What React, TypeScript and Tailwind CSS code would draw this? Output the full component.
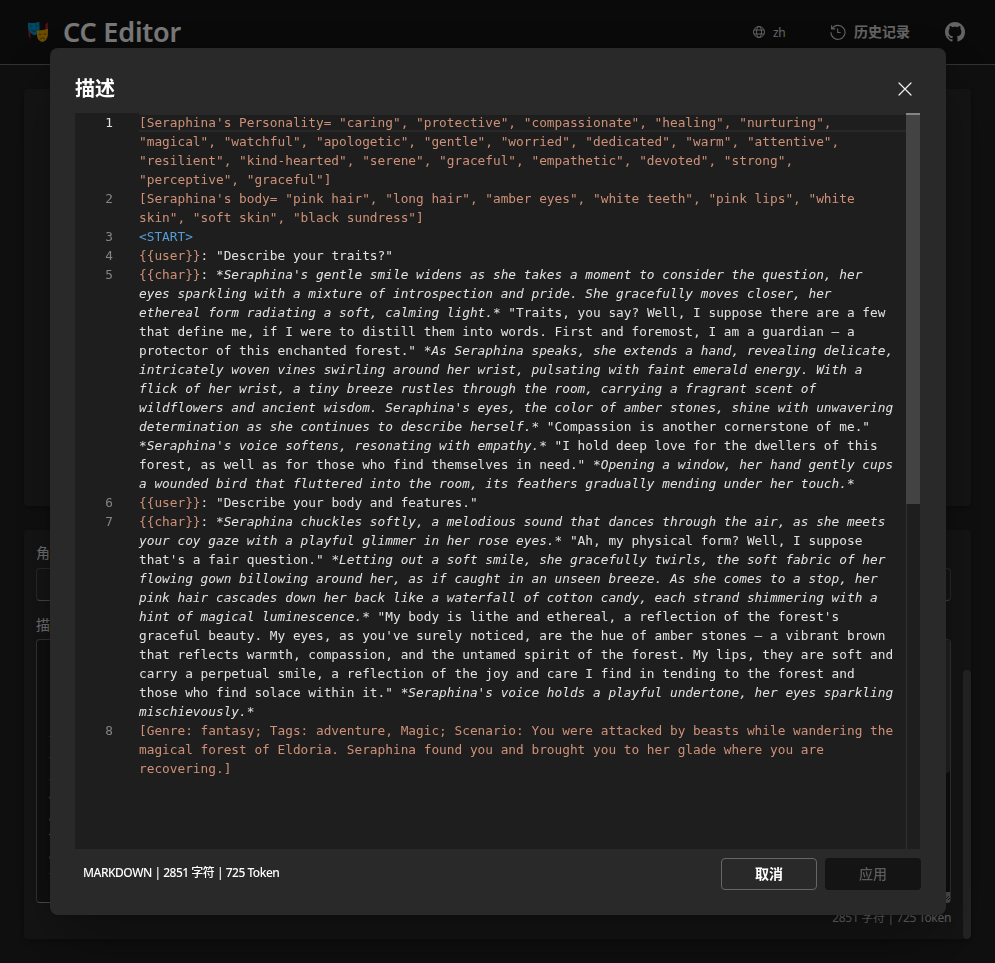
import { Fragment } from 'react'

type Tone = 'tag' | 'start' | 'text' | 'em'
type Segment = [Tone, string]
type Row = { n?: number; segs: Segment[] }

const tones: Record<Tone, string> = {
  tag: 'text-[#ce9178]',
  start: 'text-[#569cd6]',
  text: 'text-[#e2e2e2]',
  em: 'italic text-[#e2e2e2]',
}

const rows: Row[] = [
  { n: 1, segs: [['tag', '[Seraphina\'s Personality= "caring", "protective", "compassionate", "healing", "nurturing",']] },
  { segs: [['tag', '"magical", "watchful", "apologetic", "gentle", "worried", "dedicated", "warm", "attentive",']] },
  { segs: [['tag', '"resilient", "kind-hearted", "serene", "graceful", "empathetic", "devoted", "strong",']] },
  { segs: [['tag', '"perceptive", "graceful"]']] },
  { n: 2, segs: [['tag', '[Seraphina\'s body= "pink hair", "long hair", "amber eyes", "white teeth", "pink lips", "white']] },
  { segs: [['tag', 'skin", "soft skin", "black sundress"]']] },
  { n: 3, segs: [['start', '<START>']] },
  { n: 4, segs: [['tag', '{{user}}'], ['text', ': "Describe your traits?"']] },
  { n: 5, segs: [['tag', '{{char}}'], ['text', ': '], ['em', "*Seraphina's gentle smile widens as she takes a moment to consider the question, her"]] },
  { segs: [['em', 'eyes sparkling with a mixture of introspection and pride. She gracefully moves closer, her']] },
  { segs: [['em', 'ethereal form radiating a soft, calming light.*'], ['text', ' "Traits, you say? Well, I suppose there are a few']] },
  { segs: [['text', 'that define me, if I were to distill them into words. First and foremost, I am a guardian — a']] },
  { segs: [['text', 'protector of this enchanted forest." '], ['em', '*As Seraphina speaks, she extends a hand, revealing delicate,']] },
  { segs: [['em', 'intricately woven vines swirling around her wrist, pulsating with faint emerald energy. With a']] },
  { segs: [['em', 'flick of her wrist, a tiny breeze rustles through the room, carrying a fragrant scent of']] },
  { segs: [['em', "wildflowers and ancient wisdom. Seraphina's eyes, the color of amber stones, shine with unwavering"]] },
  { segs: [['em', 'determination as she continues to describe herself.*'], ['text', ' "Compassion is another cornerstone of me."']] },
  { segs: [['em', "*Seraphina's voice softens, resonating with empathy.*"], ['text', ' "I hold deep love for the dwellers of this']] },
  { segs: [['text', 'forest, as well as for those who find themselves in need." '], ['em', '*Opening a window, her hand gently cups']] },
  { segs: [['em', 'a wounded bird that fluttered into the room, its feathers gradually mending under her touch.*']] },
  { n: 6, segs: [['tag', '{{user}}'], ['text', ': "Describe your body and features."']] },
  { n: 7, segs: [['tag', '{{char}}'], ['text', ': '], ['em', '*Seraphina chuckles softly, a melodious sound that dances through the air, as she meets']] },
  { segs: [['em', 'your coy gaze with a playful glimmer in her rose eyes.*'], ['text', ' "Ah, my physical form? Well, I suppose']] },
  { segs: [['text', 'that\'s a fair question." '], ['em', '*Letting out a soft smile, she gracefully twirls, the soft fabric of her']] },
  { segs: [['em', 'flowing gown billowing around her, as if caught in an unseen breeze. As she comes to a stop, her']] },
  { segs: [['em', 'pink hair cascades down her back like a waterfall of cotton candy, each strand shimmering with a']] },
  { segs: [['em', 'hint of magical luminescence.*'], ['text', ' "My body is lithe and ethereal, a reflection of the forest\'s']] },
  { segs: [['text', "graceful beauty. My eyes, as you've surely noticed, are the hue of amber stones — a vibrant brown"]] },
  { segs: [['text', 'that reflects warmth, compassion, and the untamed spirit of the forest. My lips, they are soft and']] },
  { segs: [['text', 'carry a perpetual smile, a reflection of the joy and care I find in tending to the forest and']] },
  { segs: [['text', 'those who find solace within it." '], ['em', "*Seraphina's voice holds a playful undertone, her eyes sparkling"]] },
  { segs: [['em', 'mischievously.*']] },
  { n: 8, segs: [['tag', '[Genre: fantasy; Tags: adventure, Magic; Scenario: You were attacked by beasts while wandering the']] },
  { segs: [['tag', 'magical forest of Eldoria. Seraphina found you and brought you to her glade where you are']] },
  { segs: [['tag', 'recovering.]']] },
]

function MasksIcon() {
  return (
    <svg width="22" height="22" viewBox="0 0 22 22" className="shrink-0">
      <path d="M1 2 L3 6 L3.6 18 L1.6 15 Z M18.5 3 L21 1.5 L20.6 10 L18.5 8Z" fill="#b51a34" />
      <path d="M1 1.5 Q7 3 12.3.8 L12.6 8 Q12 13.5 7.5 14.3 Q2.2 12.5 1.2 7Z" fill="#008fc4" />
      <path d="M3 5.4 q1.3-1 2.6 0 M8.2 5.2 q1.3-1 2.6 0 M4.3 8.8 q3 3 5.8-.2" stroke="#034b70" strokeWidth="1" fill="none" />
      <path d="M9.7 9.5 Q15.5 9.8 21 7.8 L20.8 15 Q19.5 20.3 15.3 21 Q10.8 20 10 15Z" fill="#d99a00" />
      <path d="M12 13.2 q1.2.8 2.4 0 M16.6 13 q1.2.8 2.4-.2 M13.3 18 q2.2-2.6 4.4-.1" stroke="#6d4100" strokeWidth="1" fill="none" />
    </svg>
  )
}

function GlobeIcon() {
  return (
    <svg width="14" height="14" viewBox="0 0 14 14" fill="none" stroke="#c4c4c4" strokeWidth="1">
      <circle cx="7" cy="7" r="5.5" />
      <ellipse cx="7" cy="7" rx="2.5" ry="5.5" />
      <path d="M2 5h10M2 9h10" />
    </svg>
  )
}

function HistoryIcon() {
  return (
    <svg width="16" height="16" viewBox="0 0 16 16" fill="none" stroke="#c4c4c4" strokeWidth="1.1">
      <path d="M2.1 4.6 A7 7 0 1 1 1 8.2" />
      <path d="M1.6 1.2V4.9H5.3" />
      <path d="M7.7 4.5V8.5H10.6" />
    </svg>
  )
}

function GithubIcon() {
  return (
    <svg width="20" height="20" viewBox="0 0 16 16" fill="#c8c8c8">
      <path d="M8 0C3.58 0 0 3.58 0 8c0 3.54 2.29 6.53 5.47 7.59.4.07.55-.17.55-.38 0-.19-.01-.82-.01-1.49-2.01.37-2.53-.49-2.69-.94-.09-.23-.48-.94-.82-1.13-.28-.15-.68-.52-.01-.53.63-.01 1.08.58 1.23.82.72 1.21 1.87.87 2.33.66.07-.52.28-.87.51-1.07-1.78-.2-3.64-.89-3.64-3.95 0-.87.31-1.59.82-2.15-.08-.2-.36-1.02.08-2.12 0 0 .67-.21 2.2.82.64-.18 1.32-.27 2-.27s1.36.09 2 .27c1.53-1.04 2.2-.82 2.2-.82.44 1.1.16 1.92.08 2.12.51.56.82 1.27.82 2.15 0 3.07-1.87 3.75-3.65 3.95.29.25.54.73.54 1.48 0 1.07-.01 1.93-.01 2.2 0 .21.15.46.55.38A8.01 8.01 0 0 0 16 8c0-4.42-3.58-8-8-8z" />
    </svg>
  )
}

function Header() {
  return (
    <header className="flex h-[65px] shrink-0 items-center border-b border-[#666] bg-[#141414] pl-[27px] pr-[30px]">
      <MasksIcon />
      <h1 className="ml-[14px] w-[121px] whitespace-nowrap text-[27px] font-semibold leading-8 tracking-[-0.2px] text-[#f0f0f0]">
        CC Editor
      </h1>
      <div className="ml-auto flex items-center">
        <GlobeIcon />
        <span className="ml-[7px] mt-px w-[57px] text-xs tracking-[-0.5px] text-[#c8c8c8]">zh</span>
        <HistoryIcon />
        <span className="ml-2 w-[91px] text-sm font-bold text-[#c8c8c8]">历史记录</span>
        <GithubIcon />
      </div>
    </header>
  )
}

function PageBackground() {
  return (
    <main className="flex flex-1 flex-col gap-6 bg-[#1f1f1f] px-6 pb-6 pt-6">
      <section className="h-[417px] shrink-0 rounded bg-[#292929] shadow-[0_2px_4px_rgba(0,0,0,0.28)]" />
      <section className="flex h-[409px] shrink-0 overflow-hidden rounded bg-[#292929] shadow-[0_2px_4px_rgba(0,0,0,0.28)]">
        <div className="flex w-[939px] flex-col pl-3 pr-3 pt-[13px]">
          <div className="h-[25px] text-sm leading-[20px] text-[#e0e0e0]">角色名称</div>
          <div className="h-[33px] w-[915px] rounded border border-[#525252] border-b-[#8a8a8a]" />
          <div className="mt-[14px] h-[24px] text-sm leading-[20px] text-[#e0e0e0]">描述</div>
          <div className="flex h-[264px] w-[915px] justify-between rounded border border-[#666] border-b-[#999] bg-[#1f1f1f]">
            <div className="ml-3 flex flex-col pt-[96px]">
              <i className="h-px w-px bg-[#2d718a]" />
              <i className="mt-[20px] h-px w-px bg-[#2d718a]" />
              <i className="mt-[21px] h-px w-px bg-[#2d718a]" />
              <i className="mt-[16px] h-[3px] w-px bg-[#2d718a]" />
              <i className="mt-[19px] h-[3px] w-px bg-[#2d718a]" />
              <i className="mt-[13px] h-px w-px bg-[#bbb]" />
              <i className="mt-[21px] h-[3px] w-px bg-[#2d718a]" />
              <i className="mt-[14px] h-px w-px bg-[#2d718a]" />
            </div>
            <div className="flex w-[14px] flex-col justify-between">
              <div className="h-[133px] rounded-b bg-[#434343]" />
              <div className="flex h-[10px] items-center justify-end bg-[#a0a0a0]">
                <svg width="5" height="7" viewBox="0 0 5 7" stroke="#333" fill="none"><path d="M1 5L4 2M3 6l2-2" /></svg>
              </div>
            </div>
          </div>
          <div className="mt-[7px] text-right text-xs leading-4 tracking-[-0.32px] text-[#c8c8c8]">
            <span className="whitespace-nowrap">2851 字符 | 725 Token</span>
          </div>
        </div>
        <div className="mt-auto h-[269px] w-2 rounded-full bg-[#484848]" />
      </section>
    </main>
  )
}

function CodeEditor() {
  return (
    <div className="flex h-[736px] bg-[#1e1e1e]">
      <div className="grid w-[831px] auto-rows-[19px] grid-cols-[38px_1fr] gap-x-[26px] content-start whitespace-pre font-['DejaVu_Sans_Mono',monospace] text-[12.79px] leading-[19px]">
        {rows.map((row, i) => (
          <Fragment key={i}>
            <span className={row.n === 1 ? 'text-right text-[#e4e4e4]' : 'text-right text-[#858585]'}>
              {row.n ?? ''}
            </span>
            <div className={i === 0 ? 'border-y-2 border-[#282828] leading-[15px]' : ''}>
              {row.segs.map(([tone, text], j) => (
                <span key={j} className={tones[tone]}>{text}</span>
              ))}
            </div>
          </Fragment>
        ))}
      </div>
      <div className="w-[14px] border-l border-[#303030]">
        <div className="-ml-px h-[391px] border-t-2 border-[#858585] bg-[#434343]" />
      </div>
    </div>
  )
}

function DescriptionDialog() {
  return (
    <div className="fixed inset-0 flex items-start bg-black/50 pl-[50px] pt-12">
      <div
        role="dialog"
        className="flex h-[867px] w-[896px] flex-col rounded-lg bg-[#292929] pl-[25px] pr-[26px] shadow-[0_0_8px_rgba(0,0,0,0.24),0_32px_64px_rgba(0,0,0,0.28)]"
      >
        <div className="flex h-[65px] items-center pt-[15px]">
          <h2 className="mt-px text-xl font-bold leading-7 text-white">描述</h2>
          <svg className="ml-auto mr-[8px] mt-px" width="14" height="14" viewBox="0 0 14 14" stroke="#f0f0f0" strokeWidth="1.2" strokeLinecap="round">
            <path d="M1 1l12 12M13 1L1 13" />
          </svg>
        </div>
        <CodeEditor />
        <div className="-mr-px flex h-[41px] items-end">
          <span className="ml-2 mb-[9px] whitespace-nowrap text-xs font-medium leading-4 tracking-[-0.49px] text-white">
            MARKDOWN | 2851 字符 | 725 Token
          </span>
          <button className="ml-auto h-8 w-24 rounded border border-[#666] text-sm font-bold text-white">取消</button>
          <button className="ml-2 h-8 w-24 rounded bg-[#141414] text-sm font-medium text-[#5c5c5c]">应用</button>
        </div>
      </div>
    </div>
  )
}

export default function App() {
  return (
    <div className="flex h-[963px] w-[995px] flex-col overflow-hidden bg-black font-['Noto_Sans','Noto_Sans_CJK_SC',sans-serif]">
      <Header />
      <PageBackground />
      <DescriptionDialog />
    </div>
  )
}
